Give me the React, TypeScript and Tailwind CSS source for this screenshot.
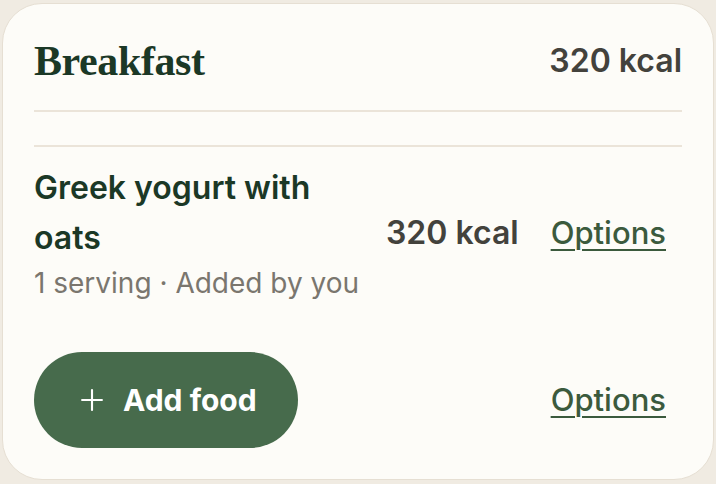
import { Plus } from "lucide-react";

const sans = "font-['Inter','Liberation_Sans',sans-serif]";

export default function App() {
  return (
    <div className={`min-h-screen bg-[#f0ebe2] px-[2px] pt-[3px] pb-[4px] ${sans}`}>
      <div className="flex h-[477px] flex-col rounded-[40px] border border-[#e6dfd3] bg-[#fdfcf8] px-[31px]">
        <div className="flex items-center justify-between border-b-2 border-[#ebe4d9] pt-[34px] pb-[26px]">
          <h2 className="font-['Liberation_Serif',serif] text-[42px] leading-[46px] font-bold tracking-[-0.4px] text-[#1b3826]">
            Breakfast
          </h2>
          <span className="text-[32px] leading-[38px] font-semibold text-[#43423c]">320 kcal</span>
        </div>

        <div className="mt-[33px] border-t-2 border-[#ebe4d9]">
          <div className="flex items-center gap-4 pt-[16px] pb-[10px]">
            <div className="flex-1">
              <div className="max-w-[320px] text-[32px] leading-[50px] font-semibold text-[#1b3826]">
                Greek yogurt with oats
              </div>
              <div className="whitespace-nowrap text-[28px] leading-[40px] text-[#7a766e]">
                1 serving · Added by you
              </div>
            </div>
            <span className="text-[32px] leading-[38px] font-semibold text-[#43423c]">320 kcal</span>
            <button className="px-4 text-[31px] leading-[38px] font-medium text-[#3b5a3d] underline underline-offset-[5px] decoration-2">
              Options
            </button>
          </div>
        </div>

        <div className="mt-auto mb-[31px] flex items-center justify-between">
          <button className="flex h-[96px] items-center gap-[14px] rounded-full bg-[#476b4c] px-[41px] text-[30px] font-bold text-white">
            <Plus size={34} strokeWidth={1.5} />
            Add food
          </button>
          <button className="px-4 text-[31px] leading-[38px] font-medium text-[#3b5a3d] underline underline-offset-[5px] decoration-2">
            Options
          </button>
        </div>
      </div>
    </div>
  );
}
